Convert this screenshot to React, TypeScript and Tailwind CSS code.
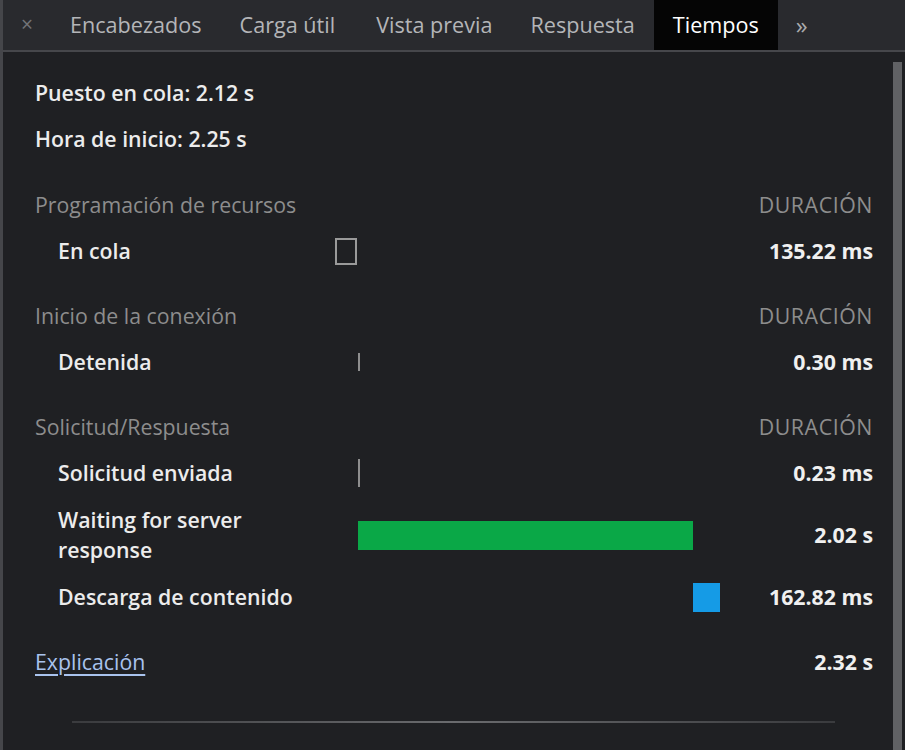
import React from "react";

const TOTAL = 2.32;
const PX_PER_S = 385 / TOTAL;

type Bar = { kind: "box" | "tick" | "green" | "blue"; start: number; dur: number; h?: number };

const tabs = ["Encabezados", "Carga útil", "Vista previa", "Respuesta", "Tiempos"];

function Timeline({ bar }: { bar: Bar }) {
  const left = Math.round(bar.start * PX_PER_S);
  const width = Math.max(2, Math.round(bar.dur * PX_PER_S));
  if (bar.kind === "tick") {
    return (
      <div className="w-[385px] flex items-center">
        <div className="w-[2px] bg-[#8e8e8e]" style={{ marginLeft: left, height: bar.h ?? 18 }} />
      </div>
    );
  }
  const cls =
    bar.kind === "box"
      ? "h-[27px] border-2 border-[#9a9a9a]"
      : bar.kind === "green"
      ? "h-[29px] bg-[#0aa847]"
      : "h-[29px] bg-[#159be6]";
  return (
    <div className="w-[385px] flex items-center">
      <div className={cls} style={{ marginLeft: left, width }} />
    </div>
  );
}

function Section({ title }: { title: string }) {
  return (
    <div className="h-[46px] flex items-center justify-between text-[#8d8d8d]">
      <span>{title}</span>
      <span className="tracking-[0.6px]">DURACIÓN</span>
    </div>
  );
}

function Row({ label, value, bar, tall }: { label: React.ReactNode; value: string; bar: Bar; tall?: boolean }) {
  return (
    <div className={tall ? "h-[78px] flex items-center" : "h-[46px] flex items-center"}>
      <div className="w-[300px] pl-[23px] font-semibold text-[#ececec] leading-[30px]">{label}</div>
      <Timeline bar={bar} />
      <div className="flex-1 text-right font-bold text-[#f0f0f0]">{value}</div>
    </div>
  );
}

export default function App() {
  return (
    <div
      className="h-[750px] w-[905px] bg-[#1f2023] border-l-[3px] border-[#45464a] flex flex-col text-[21.3px] overflow-hidden"
      style={{ fontFamily: '"Open Sans", "Noto Sans", sans-serif' }}
    >
      <div className="h-[52px] shrink-0 bg-[#292a2e] border-b-2 border-[#46474b] flex items-stretch text-[21.6px]">
        <div className="w-[48px] flex items-center justify-center text-[#727377] text-[21px]">×</div>
        {tabs.map((t) => (
          <div
            key={t}
            className={
              t === "Tiempos"
                ? "px-[19px] flex items-center bg-[#050505] text-white"
                : t === "Carga útil"
                ? "pl-[19px] pr-[22px] flex items-center text-[#b4b5b8]"
                : "px-[19px] flex items-center text-[#b4b5b8]"
            }
          >
            {t}
          </div>
        ))}
        <div className="pl-[18px] flex items-center text-[#a9aaad] text-[24px]">»</div>
      </div>

      <div className="flex-1 flex">
        <div className="flex-1 pt-[18px] pl-[32px] pr-[20px]">
          <div className="h-[46px] flex items-center font-semibold text-[#ececec]">Puesto en cola: 2.12 s</div>
          <div className="h-[46px] flex items-center font-semibold text-[#ececec]">Hora de inicio: 2.25 s</div>

          <div className="mt-[20px]">
            <Section title="Programación de recursos" />
            <Row label="En cola" value="135.22 ms" bar={{ kind: "box", start: 0, dur: 0.135 }} />
          </div>

          <div className="mt-[19px]">
            <Section title="Inicio de la conexión" />
            <Row label="Detenida" value="0.30 ms" bar={{ kind: "tick", start: 0.14, dur: 0, h: 18 }} />
          </div>

          <div className="mt-[19px]">
            <Section title="Solicitud/Respuesta" />
            <Row label="Solicitud enviada" value="0.23 ms" bar={{ kind: "tick", start: 0.14, dur: 0, h: 28 }} />
            <Row
              tall
              label={
                <>
                  Waiting for server
                  <br />
                  response
                </>
              }
              value="2.02 s"
              bar={{ kind: "green", start: 0.139, dur: 2.02 }}
            />
            <Row label="Descarga de contenido" value="162.82 ms" bar={{ kind: "blue", start: 2.157, dur: 0.163 }} />
          </div>

          <div className="mt-[19px] h-[46px] flex items-center justify-between">
            <a className="text-[#a9c3ee] underline underline-offset-4">Explicación</a>
            <span className="font-bold text-[#f0f0f0]">2.32 s</span>
          </div>

          <div className="mt-[36px] ml-[37px] mr-[38px] h-[2px] bg-gradient-to-r from-[#3a3b3e] via-[#6a6b6e] to-[#3a3b3e]" />
        </div>
        <div className="w-[9px] mt-[10px] bg-[#606164] mr-[3px]" />
      </div>
    </div>
  );
}
